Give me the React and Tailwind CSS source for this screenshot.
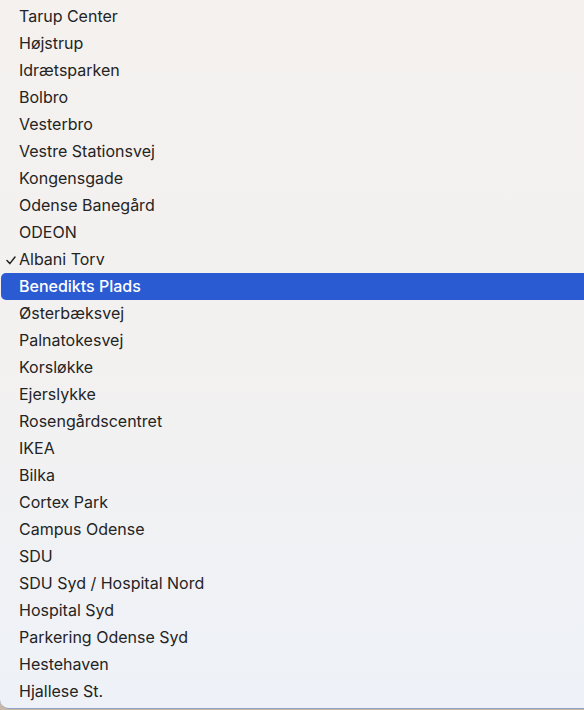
import React from "react";

const items = [
  "Tarup Center","Højstrup","Idrætsparken","Bolbro","Vesterbro","Vestre Stationsvej","Kongensgade","Odense Banegård","ODEON","Albani Torv","Benedikts Plads","Østerbæksvej","Palnatokesvej","Korsløkke","Ejerslykke","Rosengårdscentret","IKEA","Bilka","Cortex Park","Campus Odense","SDU","SDU Syd / Hospital Nord","Hospital Syd","Parkering Odense Syd","Hestehaven","Hjallese St.",
];

export default function App() {
  return (
    <div className="w-[584px] h-[710px] overflow-hidden bg-[#c9b7a8]" style={{ fontFamily: "Inter, 'Noto Sans', sans-serif" }}>
      <div className="h-[709px] rounded-bl-[9px] bg-gradient-to-b from-[#f4f1ef] via-[#f3f1f0] to-[#eef2f8] pt-[3px] pl-[1px] border-b border-[#8fa3c9]">
        {items.map((name, i) => {
          const selected = name === "Benedikts Plads";
          const checked = name === "Albani Torv";
          return (
            <div
              key={name}
              className={
                "relative h-[27px] leading-[27px] pl-[18px] text-[16px] " +
                (selected ? "bg-[#2b5bd3] text-white rounded-l-[5px] font-medium" : "text-[#242424]")
              }
            >
              {checked && (
                <svg className="absolute left-[5px] top-[10px]" width="10" height="9" viewBox="0 0 10 9" fill="none">
                  <path d="M1 4.6 L3.8 7.6 L9 1" stroke="#222" strokeWidth="1.5" strokeLinecap="round" strokeLinejoin="round" />
                </svg>
              )}
              {name}
            </div>
          );
        })}
      </div>
    </div>
  );
}
